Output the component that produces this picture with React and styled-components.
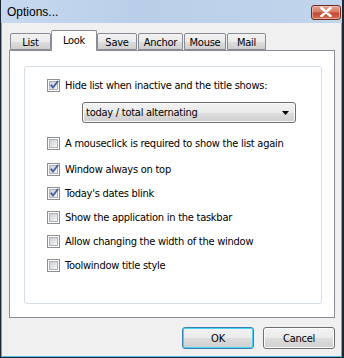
import React from "react";
import styled, { createGlobalStyle } from "styled-components";

const UI_FONT = `"DejaVu Sans Condensed", "Liberation Sans", Arial, sans-serif`;

const Global = createGlobalStyle`
  html, body { margin: 0; padding: 0; background: #ffffff; }
  body { font-family: ${UI_FONT}; font-size: 11px; letter-spacing: -0.25px; color: #000; }
  * { box-sizing: border-box; }
`;

const Window = styled.div`
  width: 344px;
  height: 358px;
  display: flex;
  flex-direction: column;
  background: linear-gradient(#bfd3ec, #d4e3f4 40px);
  border-left: 1px solid #1d2633;
  border-right: 2px solid #1d2633;
  border-bottom: 2px solid #1d2633;
`;

const TitleBar = styled.div`
  height: 23px;
  flex: none;
  display: flex;
  align-items: center;
  justify-content: space-between;
  padding: 0 1px 0 6px;
  background: linear-gradient(90deg, #c6d9ef 0%, #b9cfe9 40%, #c1d5ec 100%);
`;

const Title = styled.span`
  font-family: "Liberation Sans", Arial, sans-serif;
  font-size: 12px;
  letter-spacing: 0;
  color: #000;
  padding-top: 1px;
`;

const CloseButton = styled.div`
  width: 30px;
  height: 15px;
  margin-top: 1px;
  border: 1px solid #6d2d25;
  border-radius: 3px;
  background: linear-gradient(#e6a393 0%, #d57a66 45%, #c2462f 55%, #d0725b 100%);
  display: flex;
  align-items: center;
  justify-content: center;
  box-shadow: inset 0 0 0 1px rgba(255, 220, 210, 0.5);
`;

const Client = styled.div`
  flex: 1;
  display: flex;
  flex-direction: column;
  background: #f0f0f0;
  border-left: 1px solid #6e9fd6;
  border-right: 1px solid #6e9fd6;
  border-bottom: 1px solid #4fc3e8;
  padding: 7px 6px 7px 6px;
`;

const TabStrip = styled.div`
  display: flex;
  align-items: flex-end;
  gap: 1px;
  height: 21px;
  margin-left: 2px;
  margin-bottom: -1px;
  position: relative;
  z-index: 1;
`;

const Tab = styled.div`
  width: ${(p) => p.$w}px;
  height: ${(p) => (p.$active ? 21 : 17)}px;
  margin: ${(p) => (p.$active ? "0 -1px" : "0 0 1px 0")};
  border: 1px solid #898c95;
  border-bottom: ${(p) => (p.$active ? "none" : "1px solid #898c95")};
  border-radius: 2px 2px 0 0;
  background: ${(p) =>
    p.$active ? "#ffffff" : "linear-gradient(#f2f2f2 0%, #ebebeb 50%, #dddddd 51%, #cfcfcf 100%)"};
  display: flex;
  justify-content: center;
  align-items: flex-start;
  padding-top: ${(p) => (p.$active ? 3 : 2)}px;
  font-size: 11px;
  line-height: 13px;
  white-space: nowrap;
`;

const Panel = styled.div`
  height: 268px;
  margin-left: 1px;
  background: #ffffff;
  border: 1px solid #898c95;
  padding: 15px 12px 13px 14px;
  display: flex;
`;

const Group = styled.div`
  flex: 1;
  border: 1px solid #d5dfe5;
  border-radius: 3px;
  padding: 12px 0 0 22px;
  display: flex;
  flex-direction: column;
`;

const Row = styled.label`
  display: flex;
  align-items: center;
  gap: 5px;
  height: 13px;
  margin-top: ${(p) => p.$mt || 0}px;
  font-size: 11px;
  line-height: 13px;
  white-space: nowrap;
`;

const Box = styled.span`
  width: 13px;
  height: 13px;
  flex: none;
  border: 1px solid #8e8f8f;
  background: #ffffff;
  padding: 1px;
  display: flex;
`;

const BoxInner = styled.span`
  flex: 1;
  border: 1px solid #aeb3b9;
  background: linear-gradient(135deg, #cbcfd5 0%, #e4e6e9 60%, #f6f6f6 100%);
  position: relative;
`;

const CheckSvg = styled.svg`
  position: absolute;
  left: -1px;
  top: -2px;
`;

const Select = styled.div`
  width: 214px;
  height: 21px;
  margin: 10px 0 0 35px;
  border: 1px solid #707070;
  border-radius: 3px;
  background: linear-gradient(#f2f2f2 0%, #ebebeb 50%, #dddddd 51%, #cfcfcf 100%);
  box-shadow: inset 0 0 0 1px #f8f8f8;
  display: flex;
  align-items: center;
  justify-content: space-between;
  padding: 0 6px 0 3px;
  font-size: 11px;
`;

const ButtonRow = styled.div`
  display: flex;
  justify-content: flex-end;
  gap: 9px;
  margin-top: 9px;
`;

const Button = styled.div`
  width: 72px;
  height: 22px;
  border: 1px solid ${(p) => (p.$default ? "#3c7fb1" : "#707070")};
  border-radius: 3px;
  background: linear-gradient(#f2f2f2 0%, #ebebeb 50%, #dddddd 51%, #cfcfcf 100%);
  box-shadow: inset 0 0 0 1px ${(p) => (p.$default ? "#48d5f5" : "#fbfbfb")};
  display: flex;
  align-items: center;
  justify-content: center;
  font-size: 11px;
`;

function Checkbox({ checked }) {
  return (
    <Box>
      <BoxInner>
        {checked && (
          <CheckSvg width="11" height="11" viewBox="0 0 11 11">
            <path
              d="M1.5 5.5 L4 8.5 L9.5 1.2 L8.2 1 L4 6.8 L2.6 4.6 Z"
              fill="#3d5aa8"
              stroke="#2c4a94"
              strokeWidth="0.6"
              strokeLinejoin="round"
            />
          </CheckSvg>
        )}
      </BoxInner>
    </Box>
  );
}

const tabs = [
  { label: "List", w: 41 },
  { label: "Look", w: 46, active: true },
  { label: "Save", w: 40 },
  { label: "Anchor", w: 45 },
  { label: "Mouse", w: 42 },
  { label: "Mail", w: 39 },
];

const options = [
  { label: "A mouseclick is required to show the list again", checked: false, mt: 14 },
  { label: "Window always on top", checked: true, mt: 13 },
  { label: "Today's dates blink", checked: true, mt: 11 },
  { label: "Show the application in the taskbar", checked: false, mt: 11 },
  { label: "Allow changing the width of the window", checked: false, mt: 11 },
  { label: "Toolwindow title style", checked: false, mt: 11 },
];

export default function App() {
  return (
    <>
      <Global />
      <Window>
        <TitleBar>
          <Title>Options...</Title>
          <CloseButton>
            <svg width="12" height="10" viewBox="0 0 12 10">
              <path
                d="M1.5 1 L10.5 9 M10.5 1 L1.5 9"
                stroke="#ffffff"
                strokeWidth="2.6"
                strokeLinecap="round"
              />
            </svg>
          </CloseButton>
        </TitleBar>
        <Client>
          <TabStrip>
            {tabs.map((t) => (
              <Tab key={t.label} $w={t.w} $active={t.active}>
                {t.label}
              </Tab>
            ))}
          </TabStrip>
          <Panel>
            <Group>
              <Row>
                <Checkbox checked />
                Hide list when inactive and the title shows:
              </Row>
              <Select>
                <span>today / total alternating</span>
                <svg width="7" height="4" viewBox="0 0 7 4">
                  <path d="M0 0 H7 L3.5 4 Z" fill="#000" />
                </svg>
              </Select>
              {options.map((o) => (
                <Row key={o.label} $mt={o.mt}>
                  <Checkbox checked={o.checked} />
                  {o.label}
                </Row>
              ))}
            </Group>
          </Panel>
          <ButtonRow>
            <Button $default>OK</Button>
            <Button>Cancel</Button>
          </ButtonRow>
        </Client>
      </Window>
    </>
  );
}
